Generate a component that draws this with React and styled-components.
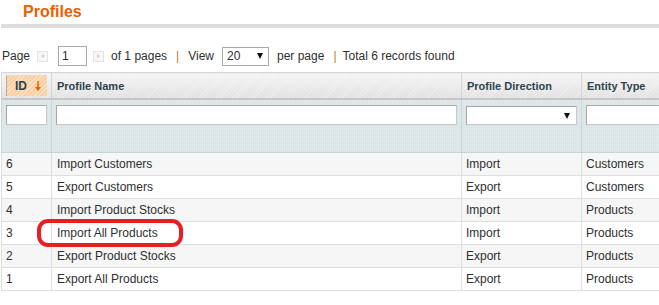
import React from "react";
import styled, { createGlobalStyle } from "styled-components";

const GlobalStyle = createGlobalStyle`
  body {
    margin: 0;
    background: #fff;
    overflow: hidden;
    font-family: "Liberation Sans", Arial, sans-serif;
    font-size: 12px;
    color: #2f2f2f;
  }
`;

const Page = styled.div`
  position: relative;
  width: 659px;
  height: 305px;
  overflow: hidden;
`;

const Title = styled.h3`
  margin: 0;
  padding: 2px 0 0 23px;
  height: 22px;
  font-size: 16px;
  line-height: 20px;
  font-weight: bold;
  color: #eb5e00;
`;

const Rule = styled.div`
  margin-left: 1px;
  height: 4px;
  background: #dddddd;
`;

const Pager = styled.div`
  display: flex;
  align-items: center;
  height: 20px;
  margin: 18px 0 0 2px;
  white-space: nowrap;
`;

const Label = styled.span`
  margin-right: ${({ $gap }) => $gap || 0}px;
`;

const ArrowButton = styled.span`
  display: inline-flex;
  align-items: center;
  justify-content: center;
  width: 9px;
  height: 9px;
  border: 1px solid #e4e4e4;
  background: #f7f7f7;
  margin-right: ${({ $gap }) => $gap || 0}px;
  &::after {
    content: "";
    border-top: 2px solid transparent;
    border-bottom: 2px solid transparent;
    ${({ $dir }) =>
      $dir === "left"
        ? "border-right: 3px solid #d0d0d0;"
        : "border-left: 3px solid #d0d0d0;"}
  }
`;

const PageInput = styled.div`
  box-sizing: border-box;
  width: 29px;
  height: 20px;
  border: 1px solid #aaa;
  padding: 2px 3px;
  margin-right: 6px;
  line-height: 14px;
`;

const Sep = styled.span`
  color: #c07a2c;
  margin: 0 ${({ $right }) => $right}px 0 9px;
`;

const ViewSelect = styled.div`
  box-sizing: border-box;
  display: flex;
  align-items: center;
  justify-content: space-between;
  width: 47px;
  height: 19px;
  border: 1px solid #aaa;
  padding: 0 5px 0 4px;
  margin-right: 8px;
  font-size: 12px;
`;

const Caret = styled.span`
  width: 0;
  height: 0;
  border-left: 3px solid transparent;
  border-right: 3px solid transparent;
  border-top: 6px solid #111;
`;

const Grid = styled.table`
  border-collapse: collapse;
  table-layout: fixed;
  margin: 6px 0 0 1px;
  width: 700px;
`;

const Head = styled.th`
  height: 23px;
  padding: 0 5px;
  text-align: left;
  font-size: 11px;
  font-weight: bold;
  color: #2d444f;
  border-top: 1px solid #d6d6d6;
  border-left: 1px solid #d6d6d6;
  border-bottom: 2px solid #c6c6c6;
  background:
    repeating-linear-gradient(135deg, rgba(255,255,255,0.35) 0 1px, transparent 1px 3px),
    linear-gradient(#f4f4f4, #e0e0e0);
  &:first-child {
    padding: 1px 4px 1px 4px;
  }
`;

const SortBox = styled.div`
  display: flex;
  align-items: center;
  justify-content: space-between;
  height: 20px;
  padding: 0 5px 0 8px;
  border-left: 1px solid #b8a898;
  border-top: 1px solid #e8d8c8;
  background:
    repeating-linear-gradient(135deg, #fde3c6 0 1px, #f9cfa3 1px 3px);
  color: #2d444f;
  font-size: 12px;
`;

const FilterRow = styled.tr`
  background:
    repeating-linear-gradient(0deg, rgba(255,255,255,0.18) 0 1px, transparent 1px 2px),
    repeating-linear-gradient(90deg, rgba(255,255,255,0.18) 0 1px, transparent 1px 2px),
    #d6e2e4;
`;

const FilterCell = styled.td`
  height: 47px;
  padding: 5px 4px 0 4px;
  vertical-align: top;
  border-left: 1px solid #c9d3d4;
  border-bottom: 1px solid #c9d3d4;
`;

const FilterInput = styled.div`
  box-sizing: border-box;
  height: 20px;
  background: #fff;
  border: 1px solid #aaa;
  border-color: #a8a8a8 #c8c8c8 #c8c8c8 #a8a8a8;
`;

const FilterSelect = styled(FilterInput)`
  display: flex;
  align-items: center;
  justify-content: flex-end;
  padding-right: 6px;
  height: 19px;
  margin-top: 1px;
`;

const Row = styled.tr`
  background: ${({ $odd }) => ($odd ? "#f6f6f6" : "#ffffff")};
`;

const Cell = styled.td`
  height: 22px;
  padding: 0 5px 0 4px;
  border-left: 1px solid #dadfe0;
  border-bottom: 1px solid #dadfe0;
  white-space: nowrap;
  color: #2f2f2f;
  &:nth-child(2) {
    padding-left: 5px;
  }
`;

const Highlight = styled.div`
  position: absolute;
  left: 37px;
  top: 219px;
  width: 138px;
  height: 20px;
  border: 4px solid #ea1c26;
  border-radius: 11px;
`;

const rows = [
  [6, "Import Customers", "Import", "Customers"],
  [5, "Export Customers", "Export", "Customers"],
  [4, "Import Product Stocks", "Import", "Products"],
  [3, "Import All Products", "Import", "Products"],
  [2, "Export Product Stocks", "Export", "Products"],
  [1, "Export All Products", "Export", "Products"],
];

export default function App() {
  return (
    <Page>
      <GlobalStyle />
      <Title>Profiles</Title>
      <Rule />
      <Pager>
        <Label $gap={7}>Page</Label>
        <ArrowButton $dir="left" $gap={10} />
        <PageInput>1</PageInput>
        <ArrowButton $dir="right" $gap={7} />
        <Label>of 1 pages</Label>
        <Sep $right={9}>|</Sep>
        <Label $gap={8}>View</Label>
        <ViewSelect>
          20 <Caret />
        </ViewSelect>
        <Label>per page</Label>
        <Sep $right={6}>|</Sep>
        <Label>Total 6 records found</Label>
      </Pager>
      <Grid>
        <colgroup>
          <col style={{ width: 50 }} />
          <col style={{ width: 410 }} />
          <col style={{ width: 120 }} />
          <col style={{ width: 120 }} />
        </colgroup>
        <thead>
          <tr>
            <Head>
              <SortBox>
                ID
                <svg width="8" height="12" viewBox="0 0 8 12">
                  <path d="M4 1v9" stroke="#eb5e00" strokeWidth="1.5" />
                  <path d="M1 7l3 4 3-4z" fill="#eb5e00" />
                </svg>
              </SortBox>
            </Head>
            <Head>Profile Name</Head>
            <Head>Profile Direction</Head>
            <Head>Entity Type</Head>
          </tr>
          <FilterRow>
            <FilterCell>
              <FilterInput />
            </FilterCell>
            <FilterCell>
              <FilterInput />
            </FilterCell>
            <FilterCell>
              <FilterSelect>
                <Caret />
              </FilterSelect>
            </FilterCell>
            <FilterCell>
              <FilterInput />
            </FilterCell>
          </FilterRow>
        </thead>
        <tbody>
          {rows.map((r, i) => (
            <Row key={r[0]} $odd={i % 2 === 0}>
              {r.map((v, j) => (
                <Cell key={j}>{v}</Cell>
              ))}
            </Row>
          ))}
        </tbody>
      </Grid>
      <Highlight />
    </Page>
  );
}
